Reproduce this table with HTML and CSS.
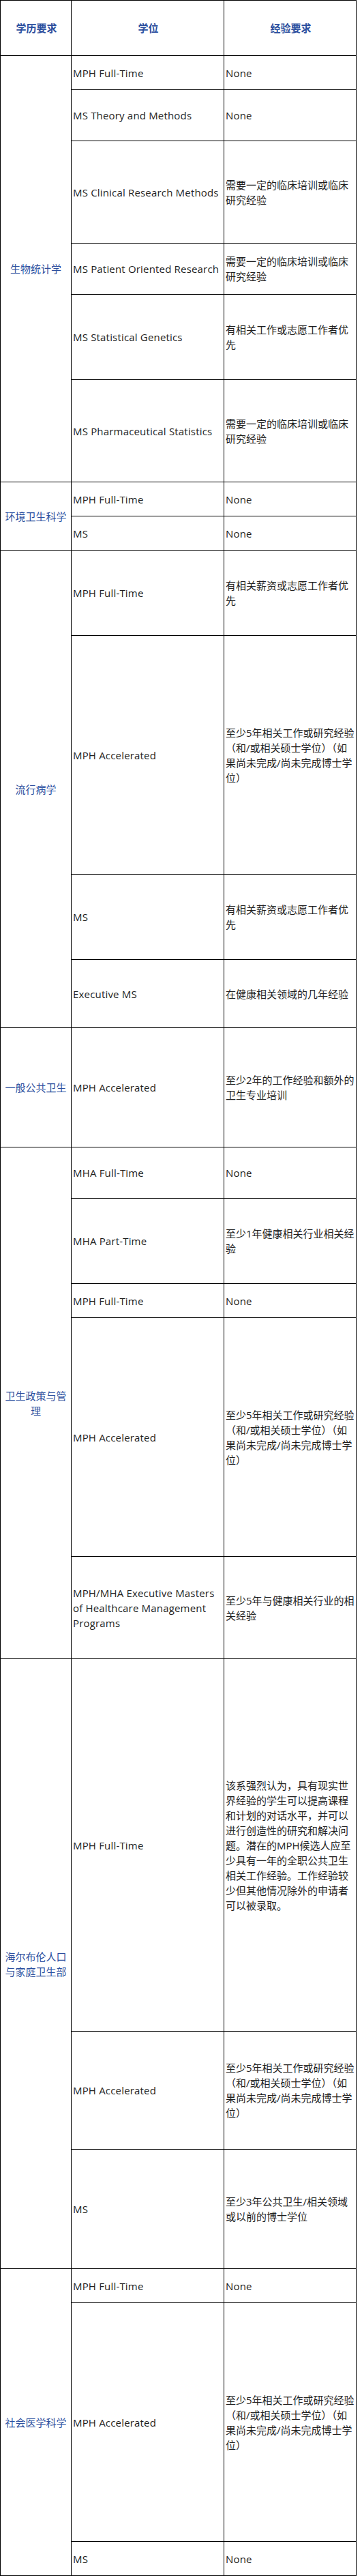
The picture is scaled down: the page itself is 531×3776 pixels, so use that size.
FILE: index.html
```html
<!DOCTYPE html>
<html lang="zh-CN">
<head>
<meta charset="utf-8">
<title>学历要求</title>
<link rel="stylesheet" href="styles.css">
</head>
<body>
<div class="req-table" role="table">
  <div class="cell head" role="columnheader">学历要求</div>
  <div class="cell head" role="columnheader">学位</div>
  <div class="cell head" role="columnheader">经验要求</div>

  <div class="cell dept span6">生物统计学</div>
  <div class="cell deg">MPH Full-Time</div>
  <div class="cell exp latin">None</div>
  <div class="cell deg">MS Theory and Methods</div>
  <div class="cell exp latin">None</div>
  <div class="cell deg">MS Clinical Research Methods</div>
  <div class="cell exp">需要一定的临床培训或临床研究经验</div>
  <div class="cell deg">MS Patient Oriented Research</div>
  <div class="cell exp">需要一定的临床培训或临床研究经验</div>
  <div class="cell deg">MS Statistical Genetics</div>
  <div class="cell exp">有相关工作或志愿工作者优先</div>
  <div class="cell deg">MS Pharmaceutical Statistics</div>
  <div class="cell exp">需要一定的临床培训或临床研究经验</div>

  <div class="cell dept span2">环境卫生科学</div>
  <div class="cell deg">MPH Full-Time</div>
  <div class="cell exp latin">None</div>
  <div class="cell deg">MS</div>
  <div class="cell exp latin">None</div>

  <div class="cell dept span4">流行病学</div>
  <div class="cell deg">MPH Full-Time</div>
  <div class="cell exp">有相关薪资或志愿工作者优先</div>
  <div class="cell deg">MPH Accelerated</div>
  <div class="cell exp">至少5年相关工作或研究经验（和/或相关硕士学位）（如果尚未完成/尚未完成博士学位）</div>
  <div class="cell deg">MS</div>
  <div class="cell exp">有相关薪资或志愿工作者优先</div>
  <div class="cell deg">Executive MS</div>
  <div class="cell exp">在健康相关领域的几年经验</div>

  <div class="cell dept span1">一般公共卫生</div>
  <div class="cell deg">MPH Accelerated</div>
  <div class="cell exp">至少2年的工作经验和额外的卫生专业培训</div>

  <div class="cell dept span5">卫生政策与管理</div>
  <div class="cell deg">MHA Full-Time</div>
  <div class="cell exp latin">None</div>
  <div class="cell deg">MHA Part-Time</div>
  <div class="cell exp">至少1年健康相关行业相关经验</div>
  <div class="cell deg">MPH Full-Time</div>
  <div class="cell exp latin">None</div>
  <div class="cell deg">MPH Accelerated</div>
  <div class="cell exp">至少5年相关工作或研究经验（和/或相关硕士学位）（如果尚未完成/尚未完成博士学位）</div>
  <div class="cell deg">MPH/MHA Executive Masters of Healthcare Management Programs</div>
  <div class="cell exp">至少5年与健康相关行业的相关经验</div>

  <div class="cell dept span3">海尔布伦人口与家庭卫生部</div>
  <div class="cell deg">MPH Full-Time</div>
  <div class="cell exp">该系强烈认为，具有现实世界经验的学生可以提高课程和计划的对话水平，并可以进行创造性的研究和解决问题。潜在的MPH候选人应至少具有一年的全职公共卫生相关工作经验。工作经验较少但其他情况除外的申请者可以被录取。</div>
  <div class="cell deg">MPH Accelerated</div>
  <div class="cell exp">至少5年相关工作或研究经验（和/或相关硕士学位）（如果尚未完成/尚未完成博士学位）</div>
  <div class="cell deg">MS</div>
  <div class="cell exp">至少3年公共卫生/相关领域或以前的博士学位</div>

  <div class="cell dept span3">社会医学科学</div>
  <div class="cell deg">MPH Full-Time</div>
  <div class="cell exp latin">None</div>
  <div class="cell deg">MPH Accelerated</div>
  <div class="cell exp">至少5年相关工作或研究经验（和/或相关硕士学位）（如果尚未完成/尚未完成博士学位）</div>
  <div class="cell deg">MS</div>
  <div class="cell exp latin">None</div>
</div>
</body>
</html>
```

FILE: styles.css
```css
html, body {
  margin: 0;
  padding: 0;
  background: #ffffff;
}

body {
  font-family: "Open Sans", "Noto Sans CJK SC", sans-serif;
  font-size: 15px;
  line-height: 22px;
  color: #1e1e1e;
}

.req-table {
  display: grid;
  width: 523px;
  box-sizing: border-box;
  background: #000000;
  padding: 1px;
  gap: 1px;
  grid-template-columns: 103px 223px 193px;
  grid-template-rows:
    80px 49px 74px 149px 74px 124px 149px
    49px 49px
    124px 349px 124px 99px
    174px
    74px 124px 49px 349px 149px
    545px 172px 174px
    49px 349px 49px;
}

.cell {
  background: #ffffff;
  display: flex;
  align-items: center;
  padding: 0 0 0 2px;
  overflow: hidden;
  word-break: break-all;
}

.head {
  justify-content: center;
  text-align: center;
  font-weight: bold;
  color: #2c4f9e;
}

.dept {
  justify-content: center;
  text-align: center;
  color: #2c4f9e;
  padding: 0 2px;
}

.deg {
  word-break: normal;
  letter-spacing: 0.18px;
}

.latin {
  letter-spacing: 0.18px;
}

.span1 { grid-row: span 1; }
.span2 { grid-row: span 2; }
.span3 { grid-row: span 3; }
.span4 { grid-row: span 4; }
.span5 { grid-row: span 5; }
.span6 { grid-row: span 6; }
```
